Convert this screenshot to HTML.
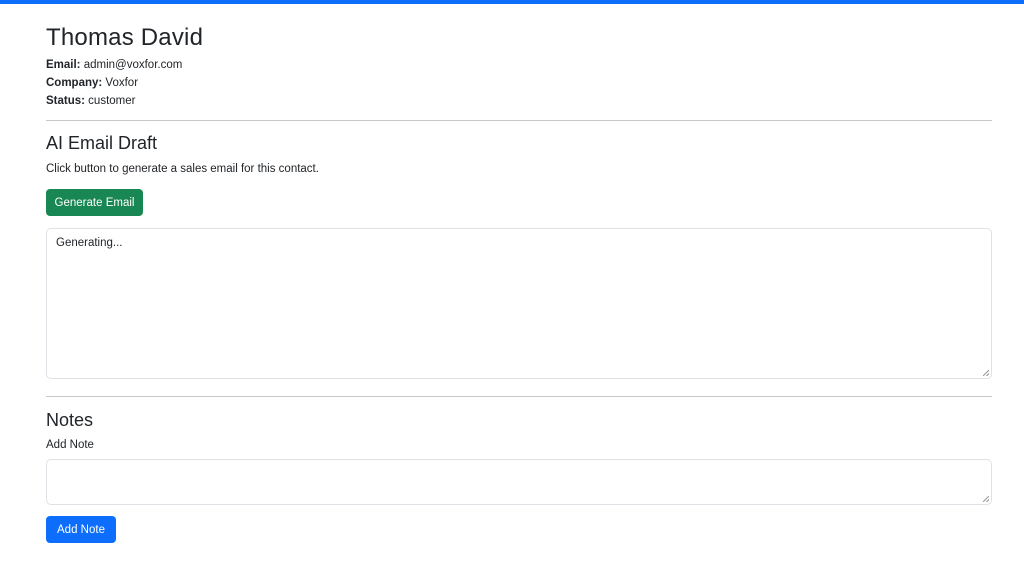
<!DOCTYPE html>
<html><head><style>
*{box-sizing:border-box;margin:0;padding:0}
body{width:1024px;height:568px;background:#fff;font-family:"Liberation Sans",sans-serif;color:#212529;position:relative;overflow:hidden}
.bar{position:absolute;left:0;top:0;width:1024px;height:4px;background:#0d6efd}
.a{position:absolute;left:46px;white-space:nowrap}
.h1{font-size:24px;font-weight:500;top:24px;letter-spacing:0.2px}
.s{font-size:11.5px;line-height:18px}
.h2{font-size:18px;font-weight:500}
.hr{position:absolute;left:46px;width:946px;height:1px;background:#c8c9ca}
.btn{position:absolute;left:46px;height:27px;border-radius:4px;color:#fff;font-size:11.5px;line-height:29px;text-align:center}
.ta{position:absolute;left:46px;width:946px;border:1px solid #dee2e6;border-radius:5px}
.rh{position:absolute;right:2px;bottom:2px;width:6px;height:6px;background:linear-gradient(135deg,transparent 45%,#999 45%,#999 55%,transparent 55%,transparent 75%,#999 75%,#999 85%,transparent 85%)}
</style></head><body>
<div class="bar"></div>
<div class="a h1">Thomas David</div>
<div class="a s" style="top:56px"><b>Email:</b> admin@voxfor.com</div>
<div class="a s" style="top:74px"><b>Company:</b> Voxfor</div>
<div class="a s" style="top:92px"><b>Status:</b> customer</div>
<div class="hr" style="top:120px"></div>
<div class="a h2" style="top:133px">AI Email Draft</div>
<div class="a s" style="top:160px">Click button to generate a sales email for this contact.</div>
<div class="btn" style="top:189px;width:97px;background:#198754">Generate Email</div>
<div class="ta" style="top:228px;height:151px"><div class="s" style="position:absolute;left:9px;top:5px">Generating...</div><div class="rh"></div></div>
<div class="hr" style="top:396px"></div>
<div class="a h2" style="top:410px">Notes</div>
<div class="a s" style="top:436px">Add Note</div>
<div class="ta" style="top:459px;height:46px"><div class="rh"></div></div>
<div class="btn" style="top:516px;width:70px;background:#0d6efd">Add Note</div>
</body></html>
